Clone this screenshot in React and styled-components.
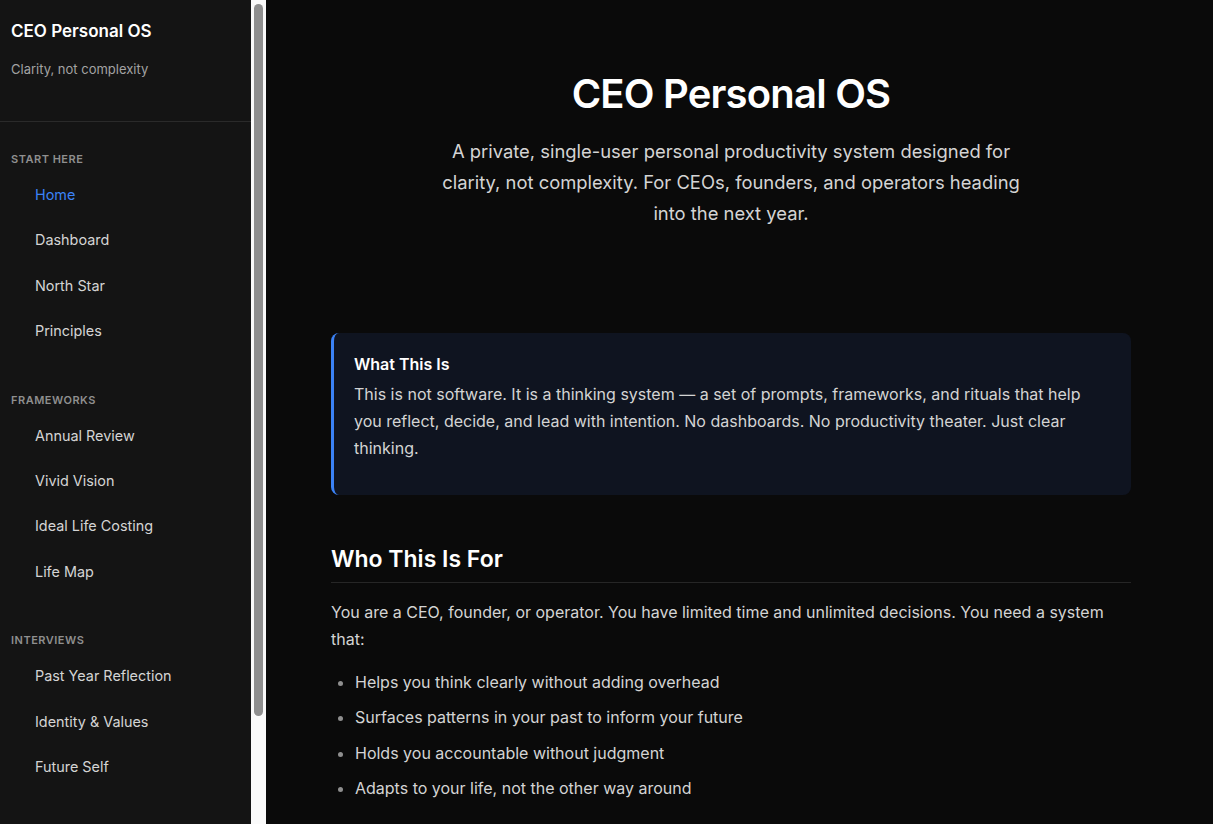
import styled, { createGlobalStyle } from "styled-components";

const Global = createGlobalStyle`
  html, body {
    margin: 0;
    padding: 0;
    background: #0a0a0a;
    font-family: Inter, "Noto Sans", sans-serif;
  }
  * { box-sizing: border-box; }
`;

const Layout = styled.div`
  display: flex;
  height: 100vh;
  overflow: hidden;
`;

const Sidebar = styled.aside`
  width: 266px;
  flex-shrink: 0;
  height: 100vh;
  display: flex;
  background: #141414;
`;

const SidebarBody = styled.div`
  width: 251px;
  height: 100%;
  overflow: hidden;
`;

const ScrollTrack = styled.div`
  width: 15px;
  height: 100%;
  background: #fafafa;
  padding: 4px 3px 0;
`;

const ScrollThumb = styled.div`
  height: ${(p) => p.$size}px;
  background: #8f8f8f;
  border-radius: 5px;
`;

const Brand = styled.div`
  padding: 20px 11px 0;
  height: 122px;
  border-bottom: 1px solid #2a2a2a;
`;

const BrandTitle = styled.div`
  font-size: 17px;
  font-weight: 600;
  color: #ffffff;
  line-height: 22px;
`;

const BrandSub = styled.div`
  margin-top: 17px;
  font-size: 13px;
  color: #a3a3a3;
  line-height: 20px;
`;

const Nav = styled.nav`
  padding: 29px 0 40px;
  display: flex;
  flex-direction: column;
  gap: 38px;
`;

const Section = styled.div``;

const SectionTitle = styled.div`
  padding: 0 11px;
  font-size: 11px;
  font-weight: 600;
  letter-spacing: 0.5px;
  text-transform: uppercase;
  color: #8f8f8f;
  line-height: 16px;
  margin-bottom: 5px;
`;

const NavItem = styled.a`
  display: block;
  padding: 12px 35px;
  font-size: 14.4px;
  line-height: 21.4px;
  color: ${(p) => (p.$active ? "#3b82f6" : "#d4d4d4")};
  text-decoration: none;
`;

const Main = styled.main`
  flex: 1;
  height: 100vh;
  overflow: hidden;
  padding: 0 0 0 65px;
`;

const Content = styled.div`
  width: 800px;
`;

const Hero = styled.header`
  padding-top: 70px;
  text-align: center;
  margin-bottom: 104px;
`;

const HeroTitle = styled.h1`
  margin: 0;
  font-size: 40px;
  font-weight: 600;
  line-height: 48px;
  color: #ffffff;
  letter-spacing: -0.8px;
`;

const HeroText = styled.p`
  margin: 18px auto 0;
  max-width: 600px;
  font-size: 18.4px;
  line-height: 31px;
  color: #d4d4d4;
`;

const Callout = styled.section`
  background: #0f1420;
  border-left: 3px solid #3b82f6;
  border-radius: 8px;
  padding: 21px 24px 17px 20px;
  margin-bottom: 48px;
`;

const CalloutTitle = styled.div`
  font-size: 16px;
  font-weight: 600;
  color: #ffffff;
  line-height: 20px;
  margin-bottom: 7px;
`;

const Para = styled.p`
  margin: 0 0 16px;
  font-size: 16px;
  line-height: 27px;
  color: #d4d4d4;
`;

const H2 = styled.h2`
  margin: 0 0 16px;
  font-size: 23px;
  font-weight: 600;
  line-height: 32px;
  color: #ffffff;
  padding-bottom: 7px;
  border-bottom: 1px solid #262626;
`;

const List = styled.ul`
  margin: 0;
  padding-left: 24px;
`;

const Item = styled.li`
  font-size: 16px;
  line-height: 27px;
  margin-bottom: 8.3px;
  color: #d4d4d4;

  &::marker {
    color: #8f8f8f;
  }
`;

const sections = [
  { title: "Start Here", items: ["Home", "Dashboard", "North Star", "Principles"] },
  { title: "Frameworks", items: ["Annual Review", "Vivid Vision", "Ideal Life Costing", "Life Map"] },
  { title: "Interviews", items: ["Past Year Reflection", "Identity & Values", "Future Self"] },
];

export default function App() {
  return (
    <Layout>
      <Global />
      <Sidebar>
        <SidebarBody>
          <Brand>
            <BrandTitle>CEO Personal OS</BrandTitle>
            <BrandSub>Clarity, not complexity</BrandSub>
          </Brand>
          <Nav>
            {sections.map((s) => (
              <Section key={s.title}>
                <SectionTitle>{s.title}</SectionTitle>
                {s.items.map((it) => (
                  <NavItem key={it} href="#" $active={it === "Home"}>
                    {it}
                  </NavItem>
                ))}
              </Section>
            ))}
          </Nav>
        </SidebarBody>
        <ScrollTrack>
          <ScrollThumb $size={712} />
        </ScrollTrack>
      </Sidebar>
      <Main>
        <Content>
          <Hero>
            <HeroTitle>CEO Personal OS</HeroTitle>
            <HeroText>
              A private, single-user personal productivity system designed for clarity, not
              complexity. For CEOs, founders, and operators heading into the next year.
            </HeroText>
          </Hero>

          <Callout>
            <CalloutTitle>What This Is</CalloutTitle>
            <Para>
              This is not software. It is a thinking system — a set of prompts, frameworks, and
              rituals that help you reflect, decide, and lead with intention. No dashboards. No
              productivity theater. Just clear thinking.
            </Para>
          </Callout>

          <H2>Who This Is For</H2>
          <Para>
            You are a CEO, founder, or operator. You have limited time and unlimited decisions. You
            need a system that:
          </Para>
          <List>
            <Item>Helps you think clearly without adding overhead</Item>
            <Item>Surfaces patterns in your past to inform your future</Item>
            <Item>Holds you accountable without judgment</Item>
            <Item>Adapts to your life, not the other way around</Item>
          </List>
        </Content>
      </Main>
    </Layout>
  );
}
